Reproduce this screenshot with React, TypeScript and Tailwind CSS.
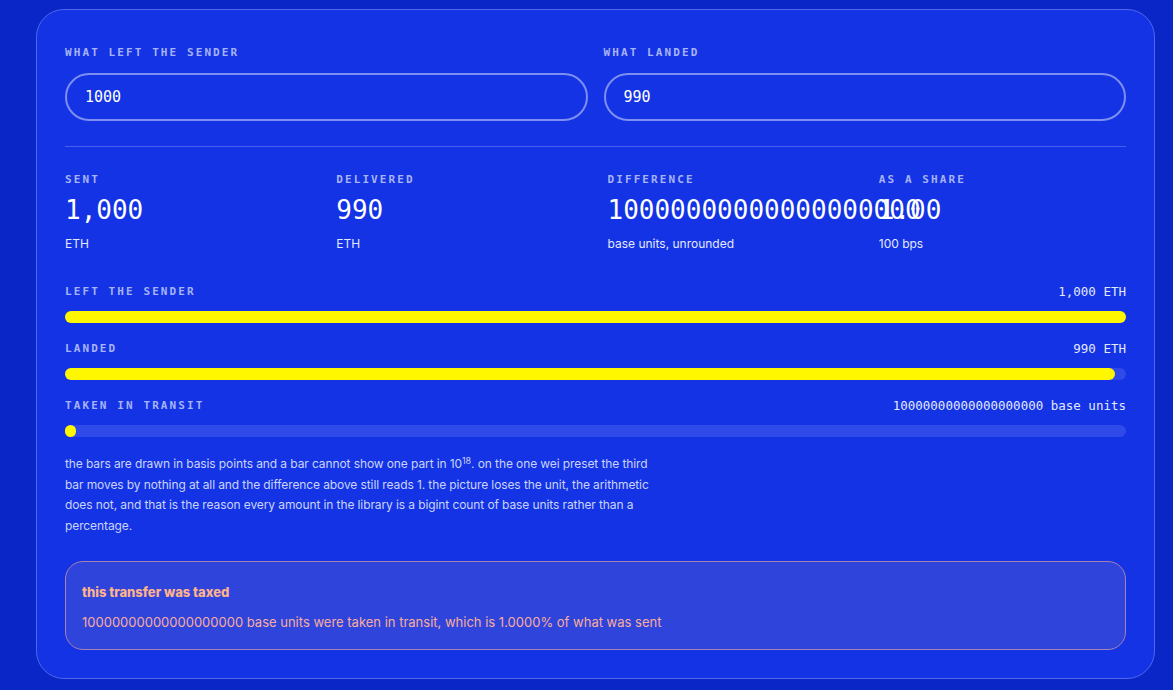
import { useState } from 'react';

const mono = "font-['DejaVu_Sans_Mono','Liberation_Mono',monospace]";
const sans = "font-['Inter','Noto_Sans',sans-serif]";

const labelCls = `${mono} text-[11px] font-bold uppercase tracking-[0.19em] text-[#a7b3f7] leading-4`;

function Stat({ label, value, unit }: { label: string; value: string; unit: string }) {
  return (
    <div className="min-w-0">
      <div className={labelCls}>{label}</div>
      <div className={`${mono} mt-1.5 whitespace-nowrap text-[26px] leading-8 text-white`}>{value}</div>
      <div className={`${sans} mt-2.5 text-[12px] leading-4 text-[#e4e9ff]`}>{unit}</div>
    </div>
  );
}

function Bar({ label, amount, pct }: { label: string; amount: string; pct: number }) {
  return (
    <div>
      <div className="flex items-center justify-between">
        <span className={labelCls}>{label}</span>
        <span className={`${mono} text-[12.5px] leading-4 text-[#e4e9ff]`}>{amount}</span>
      </div>
      <div className="mt-[11px] h-3 w-full rounded-full bg-[#2f4ae9]">
        <div className="h-3 rounded-full bg-[#fff700]" style={{ width: `${pct}%` }} />
      </div>
    </div>
  );
}

export default function App() {
  const [sent, setSent] = useState('1000');
  const [landed, setLanded] = useState('990');

  return (
    <div className="min-h-[690px] bg-[#0b26c7] pl-9 pr-[18px] pt-[9px] pb-[13px]">
      <div className={`${sans} rounded-[28px] border border-[#5068ee] bg-[#1333e4] px-7 pt-7 pb-7`}>
        <div className="grid grid-cols-2 gap-4">
          <label className="block">
            <span className={labelCls}>what left the sender</span>
            <input
              value={sent}
              onChange={(e) => setSent(e.target.value)}
              className={`${mono} mt-[11px] block h-12 w-full rounded-full border-2 border-[#7d90f1] bg-transparent px-[18px] text-[15px] text-white outline-none`}
            />
          </label>
          <label className="block">
            <span className={labelCls}>what landed</span>
            <input
              value={landed}
              onChange={(e) => setLanded(e.target.value)}
              className={`${mono} mt-[11px] block h-12 w-full rounded-full border-2 border-[#7d90f1] bg-transparent px-[18px] text-[15px] text-white outline-none`}
            />
          </label>
        </div>

        <div className="mt-[25px] border-t border-[#4660ec]" />

        <div className="mt-[25px] grid grid-cols-4 gap-6">
          <Stat label="sent" value="1,000" unit="ETH" />
          <Stat label="delivered" value="990" unit="ETH" />
          <Stat label="difference" value="10000000000000000000" unit="base units, unrounded" />
          <Stat label="as a share" value="1.00" unit="100 bps" />
        </div>

        <div className="mt-8 space-y-[18px]">
          <Bar label="left the sender" amount="1,000 ETH" pct={100} />
          <Bar label="landed" amount="990 ETH" pct={99} />
          <Bar label="taken in transit" amount="10000000000000000000 base units" pct={1} />
        </div>

        <p className="mt-[17px] max-w-[600px] text-[12px] leading-[20.7px] tracking-[-0.1px] text-[#cbd3fb]">
          the bars are drawn in basis points and a bar cannot show one part in 10<sup>18</sup>. on the one wei
          preset the third bar moves by nothing at all and the difference above still reads 1. the picture loses the
          unit, the arithmetic does not, and that is the reason every amount in the library is a bigint count of base
          units rather than a percentage.
        </p>

        <div className="mt-6 rounded-[18px] border border-[#a782b4] bg-[#2f44db] px-4 pt-5 pb-[17px]">
          <div className="text-[13px] font-extrabold leading-5 text-[#ffb38c]">this transfer was taxed</div>
          <div className="mt-2.5 text-[13px] leading-5 text-[#f7ad9c]">
            10000000000000000000 base units were taken in transit, which is 1.0000% of what was sent
          </div>
        </div>
      </div>
    </div>
  );
}
